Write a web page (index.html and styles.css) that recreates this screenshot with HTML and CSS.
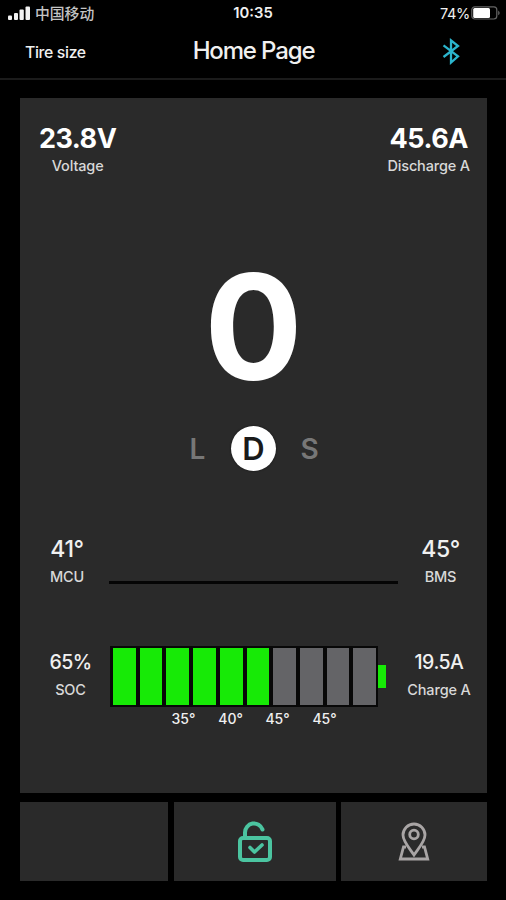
FILE: index.html
```html
<!DOCTYPE html>
<html lang="en">
<head>
    <meta charset="UTF-8">
    <meta name="viewport" content="width=device-width, initial-scale=1.0">
    <title>Home Page</title>
    <link rel="stylesheet" href="styles.css">
</head>
<body>
    <!-- Status bar -->
    <div class="status-bar">
        <div class="carrier">
            <svg class="signal" width="24" height="16" viewBox="0 0 24 16" fill="#f2f2f2">
                <rect x="0" y="10.5" width="4" height="4.500" rx="1"/>
                <rect x="6" y="8" width="4" height="7" rx="1"/>
                <rect x="11.500" y="4.500" width="4.300" height="10.500" rx="1"/>
                <rect x="17.500" y="1.500" width="4.500" height="13.500" rx="1"/>
            </svg>
            <span class="carrier-name" lang="zh">中国移动</span>
        </div>
        <div class="clock">10:35</div>
        <div class="power">
            <span class="percent">74%</span>
            <svg width="30" height="14" viewBox="0 0 30 14">
                <rect x="0.8" y="0.8" width="25" height="12.2" rx="3" fill="none" stroke="#666" stroke-width="1.2"/>
                <rect x="2.2" y="2" width="16.8" height="10" rx="1.5" fill="#fff"/>
                <path d="M27.2 4.5q3 2.400 0 4.800z" fill="#666"/>
            </svg>
        </div>
    </div>

    <header class="nav">
        <div class="nav-left">Tire size</div>
        <h1>Home Page</h1>
        <div class="nav-right">
            <svg width="18" height="28" viewBox="0 0 18 28" fill="none" stroke="#2bb5cd" stroke-width="2.3">
                <path d="M1.5 8.300L16 19.300L9 25.500V3.300L16 9L1.500 20"/>
            </svg>
        </div>
    </header>

    <main class="panel">
        <div class="top-row">
            <div class="stat">
                <div class="big">23.8V</div>
                <div class="label">Voltage</div>
            </div>
            <div class="stat">
                <div class="big">45.6A</div>
                <div class="label">Discharge A</div>
            </div>
        </div>

        <div class="speed">0</div>

        <div class="gears">
            <span class="gear">L</span>
            <span class="gear active">D</span>
            <span class="gear">S</span>
        </div>

        <div class="row temp-row">
            <div class="side">
                <div class="value">41°</div>
                <div class="label">MCU</div>
            </div>
            <div class="line"></div>
            <div class="side">
                <div class="value">45°</div>
                <div class="label">BMS</div>
            </div>
        </div>

        <div class="row charge-row">
            <div class="side soc">
                <div class="value">65%</div>
                <div class="label">SOC</div>
            </div>
            <div class="battery-box">
                <div class="battery">
                    <div class="cells">
                        <i class="on"></i><i class="on"></i><i class="on"></i><i class="on"></i><i class="on"></i><i class="on"></i>
                        <i></i><i></i><i></i><i></i>
                    </div>
                    <div class="nub"></div>
                </div>
                <div class="cell-temps">
                    <span>35°</span><span>40°</span><span>45°</span><span>45°</span>
                </div>
            </div>
            <div class="side charge">
                <div class="value">19.5A</div>
                <div class="label">Charge A</div>
            </div>
        </div>
    </main>

    <!-- Bottom buttons -->
    <div class="tiles">
        <div class="tile"></div>
        <div class="tile">
            <svg width="36" height="42" viewBox="0 0 36 42" fill="none" stroke="#4bc4a0" stroke-width="4" stroke-linecap="round" stroke-linejoin="round">
                <rect x="3" y="17" width="30" height="22" rx="3"/>
                <path d="M8 16.5V11.500a9 9 0 0 1 17.500-3"/>
                <path d="M13 26.500l4.500 4.500l7.500-7" stroke-width="3.600"/>
            </svg>
        </div>
        <div class="tile">
            <svg width="32" height="39" viewBox="0 0 32 39" fill="none" stroke="#a9a5a5" stroke-width="2.8">
                <path d="M16 33C12 27 5 19.500 5 13a11 11 0 0 1 22 0C27 19.500 20 27 16 33z"/>
                <circle cx="16" cy="12.500" r="4.300"/>
                <path d="M8 25H5.500L2.300 37H29.700L26.500 25H24"/>
            </svg>
        </div>
    </div>
</body>
</html>
```

FILE: styles.css
```css
* {
    box-sizing: border-box;
}
body {
    margin: 0;
    height: 900px;
    overflow: hidden;
    background: #000;
    color: #f0f0f0;
    font-family: Inter, "Noto Sans CJK SC", sans-serif;
}

/* Status bar */
.status-bar {
    display: grid;
    grid-template-columns: 1fr 60px 1fr;
    align-items: center;
    height: 26px;
    padding: 0 5px 0 8px;
}
.carrier, .power {
    display: flex;
    align-items: center;
}
.carrier {
    gap: 3px;
}
.carrier-name {
    font-family: "Noto Sans CJK SC", sans-serif;
    font-size: 14.8px;
    font-weight: 500;
    line-height: 20px;
    color: #c4c4c4;
}
.clock {
    margin-left: -3px;
    text-align: center;
    font-size: 14.8px;
    font-weight: 600;
}
.power {
    justify-content: flex-end;
    gap: 1px;
}
.percent {
    font-size: 14.5px;
    letter-spacing: -0.3px;
}

/* Title bar */
.nav {
    display: grid;
    grid-template-columns: 1fr 140px 1fr;
    align-items: center;
    height: 54px;
    padding: 0 46px 3px 25px;
    border-bottom: 2px solid #1b1b1b;
}
.nav h1 {
    margin: 0 -11px 0 11px;
    text-align: center;
    font-size: 24px;
    font-weight: 500;
    letter-spacing: -1.15px;
    line-height: 30px;
    padding-top: 1px;
    white-space: nowrap;
}
.nav-left {
    padding-top: 3px;
    font-size: 15.8px;
    font-weight: 500;
    letter-spacing: -0.35px;
}
.nav-right {
    display: flex;
    justify-content: flex-end;
}

/* Main panel */
.panel {
    display: flex;
    flex-direction: column;
    width: 467px;
    height: 695px;
    margin: 18px 0 0 20px;
    background: #2a2a2a;
}
.label {
    font-size: 14.5px;
    font-weight: 500;
    line-height: 20px;
    letter-spacing: -0.15px;
    white-space: nowrap;
    color: #d8d8d8;
}
.top-row {
    display: flex;
    justify-content: space-between;
    height: 154px;
    padding: 25px 17px 0 19px;
    text-align: center;
}
.big {
    font-size: 27px;
    font-weight: 700;
    line-height: 32px;
    letter-spacing: -0.5px;
    margin-bottom: 1px;
    color: #fff;
}
.speed {
    height: 150px;
    text-align: center;
    font-size: 146px;
    font-weight: 700;
    line-height: 150px;
    color: #fff;
}
.gears {
    display: flex;
    justify-content: center;
    align-items: center;
    gap: 11px;
    height: 92px;
}
.gear {
    width: 45px;
    height: 45px;
    text-align: center;
    font-size: 28px;
    font-weight: 600;
    line-height: 47px;
    color: #777;
}
.gear.active {
    border-radius: 50%;
    background: #fff;
    color: #1a1a1a;
    font-size: 31px;
    line-height: 46px;
    box-shadow: 0 0 2px #111;
}

/* Readings left and right of the line and the battery */
.row {
    display: grid;
    grid-template-columns: 90px 1fr 90px;
}
.side {
    text-align: center;
}
.value {
    font-weight: 500;
    white-space: nowrap;
}
.temp-row {
    height: 112px;
    padding-top: 41px;
    margin-left: 2px;
}
.temp-row .side:last-child {
    padding-right: 3px;
}
.temp-row .value {
    font-size: 23px;
    line-height: 28px;
    letter-spacing: -0.4px;
    margin-bottom: 4px;
}
.line {
    height: 3px;
    margin: 46px -1px 0 -3px;
    background: #050505;
}
.charge-row {
    padding-top: 40px;
}
.charge-row .value {
    font-size: 19.5px;
    line-height: 26px;
    letter-spacing: -0.5px;
    margin: 3px 0 5px;
}
.soc {
    padding-left: 11px;
}
.charge {
    padding-right: 6px;
}
.battery {
    display: flex;
    align-items: center;
}
.cells {
    display: grid;
    grid-template-columns: repeat(10, 1fr);
    gap: 4px;
    width: 268px;
    height: 61px;
    padding: 2px 2px 2px 3px;
    background: #080808;
}
.cells i {
    background: #646467;
}
.cells .on {
    background: #17ea06;
}
.nub {
    width: 8px;
    height: 23px;
    background: #17ea06;
}
.cell-temps {
    display: grid;
    grid-template-columns: repeat(4, 47px);
    padding: 2px 0 0 50px;
    text-align: center;
    font-size: 14px;
    font-weight: 500;
    line-height: 20px;
}

.tiles {
    display: grid;
    grid-template-columns: 148px 162px 146px;
    justify-content: space-between;
    width: 467px;
    height: 79px;
    margin: 9px 0 0 20px;
}
.tile {
    display: flex;
    align-items: center;
    justify-content: center;
    background: #2a2a2a;
}
```
